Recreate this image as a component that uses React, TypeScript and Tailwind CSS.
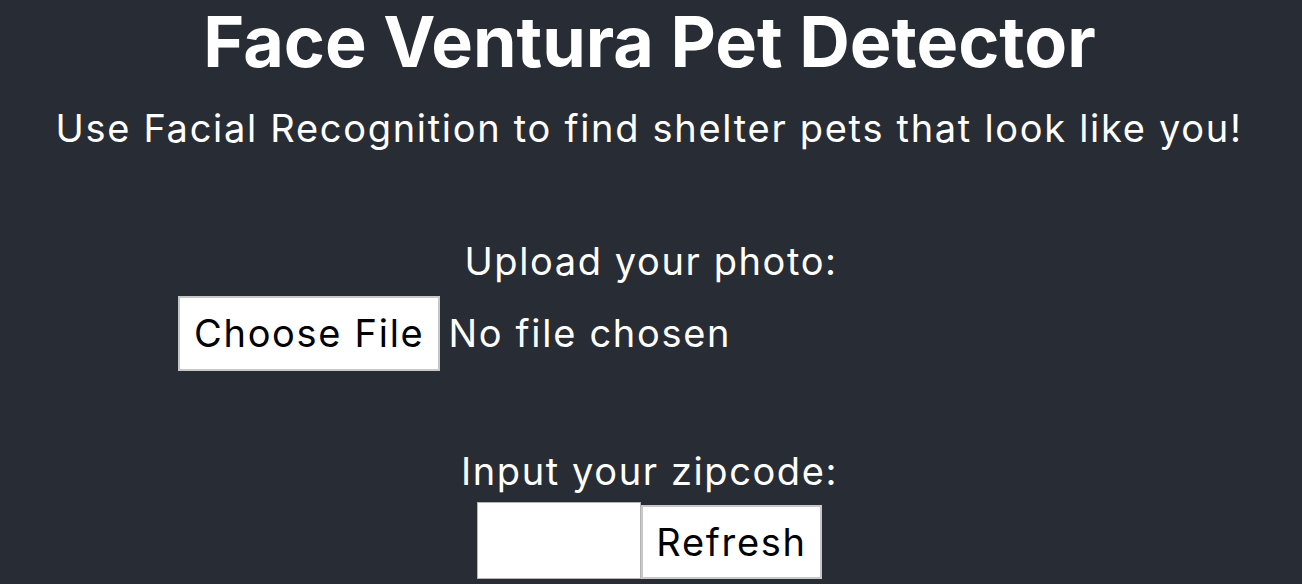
export default function App() {
  return (
    <div
      className="min-h-[584px] bg-[#282c34] text-white flex flex-col items-center overflow-hidden"
      style={{ fontFamily: "Inter, 'Noto Sans', sans-serif" }}
    >
      <h1 className="text-[70px] font-bold leading-none mt-[7px] ml-[-3px]">Face Ventura Pet Detector</h1>
      <p className="text-[38px] tracking-[1.7px] leading-none mt-[32px] ml-[-4px]">Use Facial Recognition to find shelter pets that look like you!</p>
      <p className="text-[38px] tracking-[1.6px] leading-none mt-[95px]">Upload your photo:</p>
      <div className="w-[946px] flex items-center mt-[16px]">
        <button className="h-[75px] px-[14px] bg-white text-black text-[38px] tracking-[1.7px] border-2 border-[#c8c8c8]">Choose File</button>
        <span className="text-[38px] tracking-[1.7px] ml-[8px]">No file chosen</span>
      </div>
      <p className="text-[38px] tracking-[1.6px] leading-none mt-[81px] ml-[-3px]">Input your zipcode:</p>
      <div className="flex items-end mt-[12px] ml-[-3px]">
        <input className="w-[164px] h-[77px] bg-white border border-[#b5b5b5]" />
        <button className="h-[74px] px-[13px] bg-white text-black text-[38px] tracking-[1.7px] border-2 border-[#c8c8c8]">Refresh</button>
      </div>
    </div>
  );
}
